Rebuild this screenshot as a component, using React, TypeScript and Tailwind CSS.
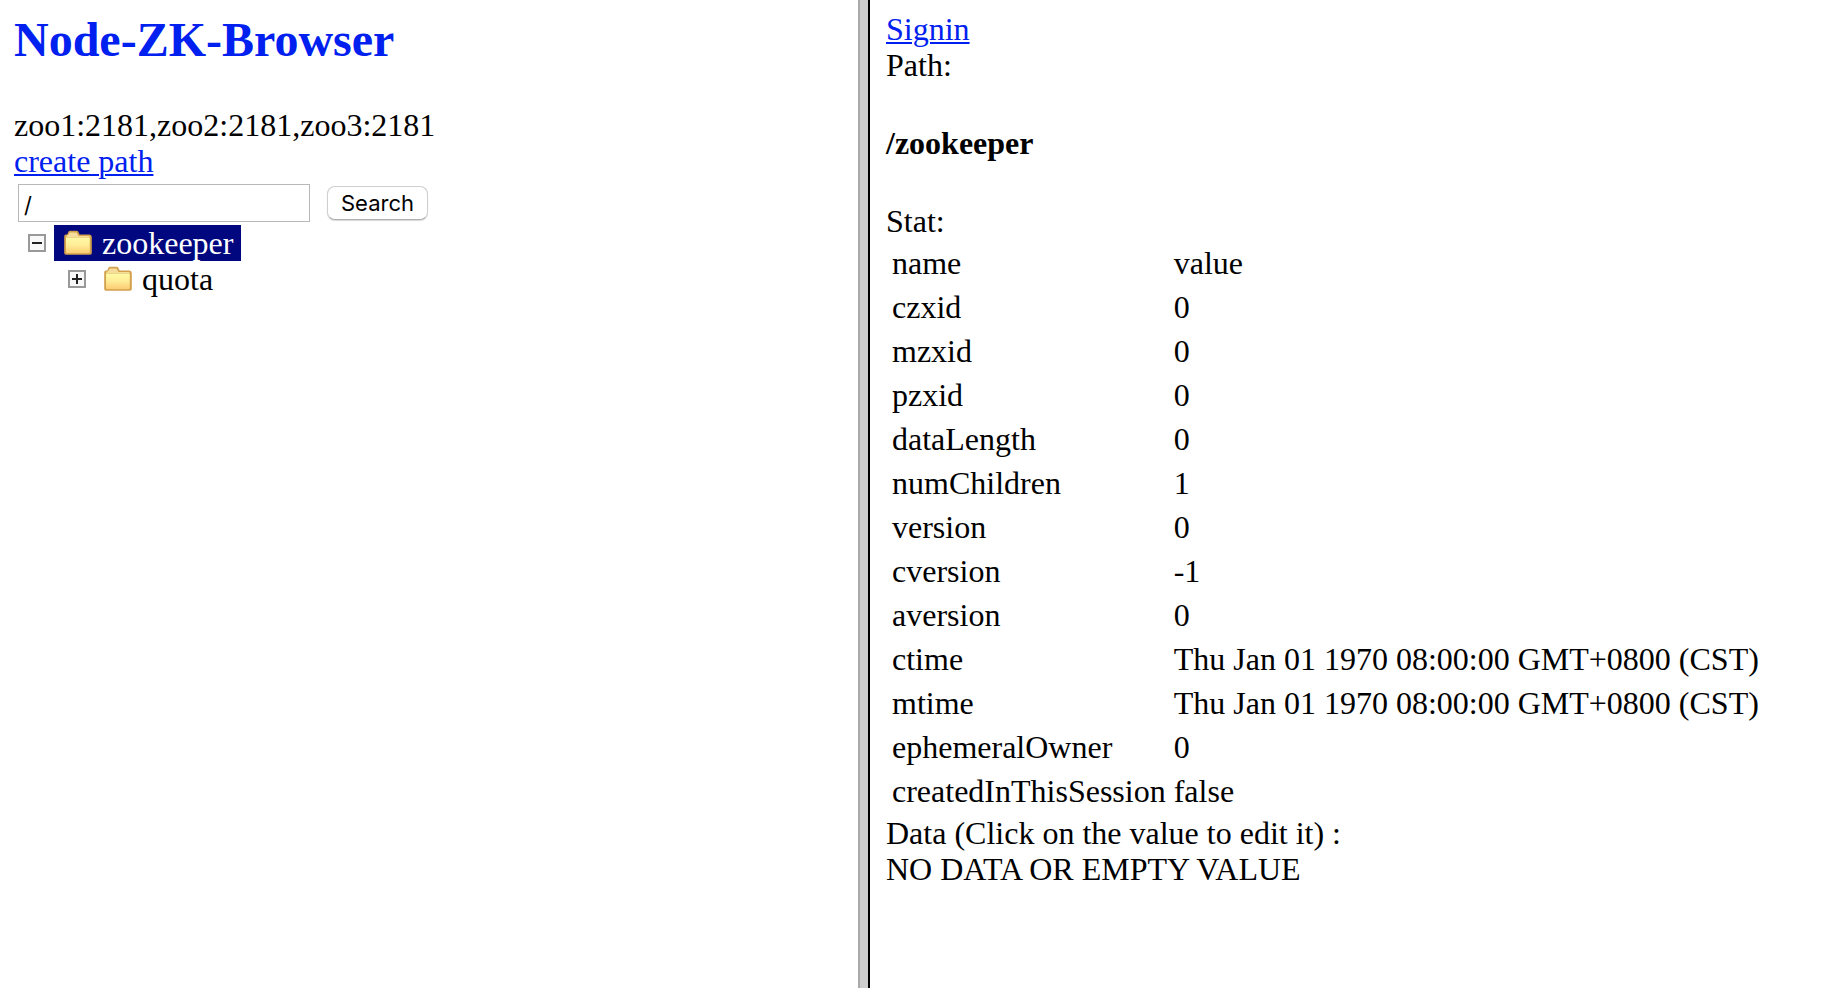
import { useState } from "react";

const stats: [string, string][] = [
  ["czxid", "0"],
  ["mzxid", "0"],
  ["pzxid", "0"],
  ["dataLength", "0"],
  ["numChildren", "1"],
  ["version", "0"],
  ["cversion", "-1"],
  ["aversion", "0"],
  ["ctime", "Thu Jan 01 1970 08:00:00 GMT+0800 (CST)"],
  ["mtime", "Thu Jan 01 1970 08:00:00 GMT+0800 (CST)"],
  ["ephemeralOwner", "0"],
  ["createdInThisSession", "false"],
];

function Folder() {
  return (
    <svg className="h-[26px] w-7 shrink-0" viewBox="0 0 28 26" aria-hidden="true">
      <defs>
        <linearGradient id="folder-front" x1="0" y1="0" x2="0" y2="1">
          <stop offset="0" stopColor="#fffaa6" />
          <stop offset="0.5" stopColor="#ffec96" />
          <stop offset="1" stopColor="#fbcb72" />
        </linearGradient>
      </defs>
      <path d="M0.2 23V6.2Q0.2 4.6 1.8 4.4H3.2L4.4 1.8Q4.9 0.8 6 0.8H12.6Q13.8 0.8 14.3 1.8L15.6 4.4H25.4Q27.8 4.6 27.8 7V23Q27.8 24.8 26 24.8H2Q0.2 24.8 0.2 23Z" fill="#d3a04c" />
      <path d="M4.6 4.8L5.8 2.4H12.6L14.6 6H25.2L25.8 7.2H2.2L2.8 5.8Z" fill="#f7dd9c" />
      <path d="M2 7.6H25.8V22Q25.8 23.2 24.6 23.2H3.2Q2 23.2 2 22Z" fill="url(#folder-front)" />
    </svg>
  );
}

function Toggle({ expanded, label }: { expanded: boolean; label: string }) {
  return (
    <button type="button" aria-label={label} aria-expanded={expanded} className="size-[18px] shrink-0">
      <svg className="size-[18px]" viewBox="0 0 18 18" aria-hidden="true">
        <rect x="1" y="1" width="16" height="16" fill="#f8f8f8" stroke="#999" strokeWidth="2" />
        <path d={expanded ? "M4 9H14" : "M4 9H14M9 4V14"} stroke="#222" strokeWidth="2" />
      </svg>
    </button>
  );
}

export default function App() {
  const [path, setPath] = useState("/");
  return (
    <div className="grid min-h-screen grid-cols-[858fr_12px_958fr] bg-white font-['Liberation_Serif',serif] text-[32px] leading-9 text-black">
      <main className="min-w-0 px-[14px] pt-3">
        <h1 className="mb-[39px] text-5xl leading-[56px] font-bold text-[#0020f0]">Node-ZK-Browser</h1>
        <div>zoo1:2181,zoo2:2181,zoo3:2181</div>
        <a href="#create" className="block w-fit text-[#0020f0] underline decoration-2 underline-offset-2">create path</a>
        <form className="flex items-center gap-[17px] px-1 pt-[5px] pb-[3px]" onSubmit={(e) => e.preventDefault()}>
          <input
            aria-label="Path"
            value={path}
            onChange={(e) => setPath(e.target.value)}
            className="h-[38px] w-[292px] border border-[#b8b8b8] px-[5px] pt-1 font-[Inter,sans-serif] text-[22px] leading-7 outline-none"
          />
          <button
            type="submit"
            className="h-[34px] rounded-lg border border-[#cfcfcf] border-b-[#b0b0b0] bg-white px-[13px] font-[Inter,sans-serif] text-[22px] leading-7 shadow-[0_1px_1px_#d8d8d8]"
          >
            Search
          </button>
        </form>
        <ul>
          <li>
            <div className="flex items-center gap-2 pl-[14px]">
              <Toggle expanded label="Collapse zookeeper" />
              <a href="#zookeeper" className="flex h-9 items-center gap-[10px] bg-[#00077f] pr-2 pl-[10px] text-white">
                <Folder />
                zookeeper
              </a>
            </div>
            <ul>
              <li className="flex items-center gap-2 pl-[54px]">
                <Toggle expanded={false} label="Expand quota" />
                <a href="#quota" className="flex h-9 items-center gap-[10px] pr-2 pl-[10px]">
                  <Folder />
                  quota
                </a>
              </li>
            </ul>
          </li>
        </ul>
      </main>
      <div className="border-r-2 border-l-2 border-r-black border-l-[#a9a9a9] bg-[#cecece]" role="separator" />
      <section className="min-w-0 px-4 pt-[11px]">
        <a href="#signin" className="block w-fit text-[#0020f0] underline decoration-2 underline-offset-2">Signin</a>
        <div>Path:</div>
        <h2 className="my-[42px] font-bold">/zookeeper</h2>
        <div>Stat:</div>
        <table className="border-separate border-spacing-1">
          <thead>
            <tr>
              <th className="p-0.5 text-left font-normal">name</th>
              <th className="p-0.5 text-left font-normal">value</th>
            </tr>
          </thead>
          <tbody>
            {stats.map(([name, value]) => (
              <tr key={name}>
                <td className="p-0.5">{name}</td>
                <td className="p-0.5">{value}</td>
              </tr>
            ))}
          </tbody>
        </table>
        <div>Data (Click on the value to edit it) :</div>
        <div>NO DATA OR EMPTY VALUE</div>
      </section>
    </div>
  );
}
